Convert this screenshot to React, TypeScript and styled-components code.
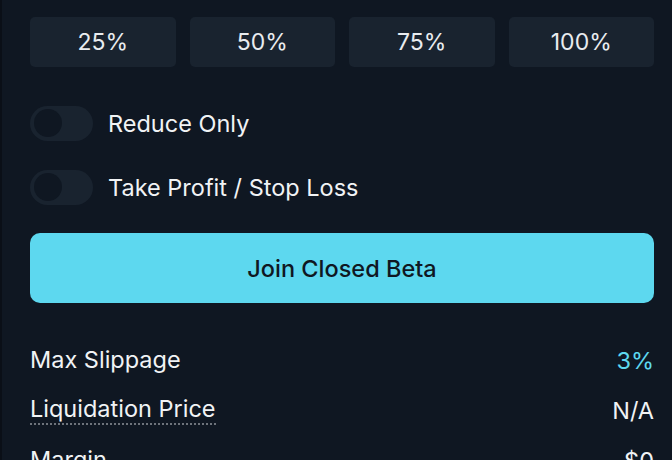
import React, { useState } from 'react';
import styled, { createGlobalStyle } from 'styled-components';

const GlobalStyle = createGlobalStyle`
  html, body {
    margin: 0;
    padding: 0;
    background: #0f1722;
    height: 100%;
  }
  #root {
    height: 100%;
  }
`;

const Panel = styled.div`
  box-sizing: border-box;
  height: 460px;
  overflow: hidden;
  background: #0f1722;
  border-left: 2px solid #0a0f17;
  padding: 17px 18px 0 28px;
  font-family: Inter, "Noto Sans", sans-serif;
  color: #f1f3f5;
  display: flex;
  flex-direction: column;
`;

const PresetRow = styled.div`
  display: grid;
  grid-template-columns: repeat(4, 1fr);
  gap: 14px;
  flex-shrink: 0;
`;

const PresetButton = styled.button`
  height: 50px;
  border: none;
  border-radius: 5px;
  background: #19232f;
  color: #e9ecef;
  font-family: inherit;
  font-size: 23px;
  cursor: pointer;
`;

const Options = styled.div`
  display: flex;
  flex-direction: column;
  gap: 29px;
  margin-top: 39px;
  flex-shrink: 0;
`;

const ToggleRow = styled.label`
  display: flex;
  align-items: center;
  gap: 15px;
  font-size: 23.5px;
  cursor: pointer;
`;

const Track = styled.span<{ $on: boolean }>`
  position: relative;
  width: 63px;
  height: 35px;
  border-radius: 18px;
  background: ${({ $on }) => ($on ? '#5dd8ef' : '#19232f')};
  flex-shrink: 0;
`;

const Knob = styled.span<{ $on: boolean }>`
  position: absolute;
  top: 3px;
  left: ${({ $on }) => ($on ? '31px' : '4px')};
  width: 28px;
  height: 28px;
  border-radius: 50%;
  background: #0f1722;
`;

const JoinButton = styled.button`
  flex-shrink: 0;
  margin-top: 28px;
  height: 70px;
  border: none;
  border-radius: 10px;
  background: #5dd8ef;
  color: #0f1722;
  font-family: inherit;
  font-size: 23.5px;
  font-weight: 500;
  cursor: pointer;
`;

const Details = styled.div`
  display: flex;
  flex-direction: column;
  margin-top: 32px;
  flex-shrink: 0;
`;

const DetailRow = styled.div`
  display: flex;
  justify-content: space-between;
  align-items: center;
  height: 50px;
  font-size: 23.5px;
`;

const Label = styled.span<{ $hint?: boolean }>`
  line-height: 1.2;
  ${({ $hint }) => $hint && 'border-bottom: 2px dotted #6d737b;'}
`;

const Value = styled.span<{ $accent?: boolean }>`
  color: ${({ $accent }) => ($accent ? '#5dd8ef' : '#f1f3f5')};
`;

const Toggle = ({ label }: { label: string }) => {
  const [on, setOn] = useState(false);
  return (
    <ToggleRow onClick={() => setOn(!on)}>
      <Track $on={on}>
        <Knob $on={on} />
      </Track>
      {label}
    </ToggleRow>
  );
};

const details = [
  { label: 'Max Slippage', value: '3%', accent: true },
  { label: 'Liquidation Price', value: 'N/A', hint: true },
  { label: 'Margin', value: '$0' },
];

export default function App() {
  return (
    <>
      <GlobalStyle />
      <Panel>
        <PresetRow>
          {['25%', '50%', '75%', '100%'].map((p) => (
            <PresetButton key={p}>{p}</PresetButton>
          ))}
        </PresetRow>
        <Options>
          <Toggle label="Reduce Only" />
          <Toggle label="Take Profit / Stop Loss" />
        </Options>
        <JoinButton>Join Closed Beta</JoinButton>
        <Details>
          {details.map((d) => (
            <DetailRow key={d.label}>
              <Label $hint={d.hint}>{d.label}</Label>
              <Value $accent={d.accent}>{d.value}</Value>
            </DetailRow>
          ))}
        </Details>
      </Panel>
    </>
  );
}
